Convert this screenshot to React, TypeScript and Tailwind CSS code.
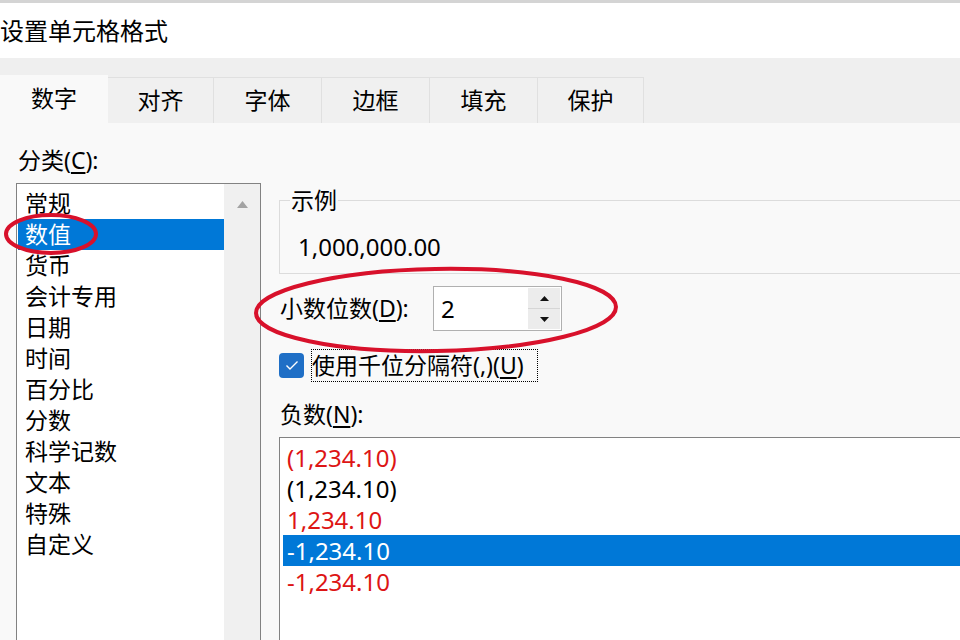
import React from 'react'

const categories = ['常规', '数值', '货币', '会计专用', '日期', '时间', '百分比', '分数', '科学记数', '文本', '特殊', '自定义']

const tabs = [
  { name: '数字', w: 'w-[108px]', active: true },
  { name: '对齐', w: 'w-[106px]' },
  { name: '字体', w: 'w-[108px]' },
  { name: '边框', w: 'w-[108px]' },
  { name: '填充', w: 'w-[108px]' },
  { name: '保护', w: 'w-[106px]' },
]

const negatives = [
  { text: '(1,234.10)', red: true },
  { text: '(1,234.10)' },
  { text: '1,234.10', red: true },
  { text: '-1,234.10', selected: true },
  { text: '-1,234.10', red: true },
]

export default function App() {
  return (
    <div className="relative h-[640px] w-[960px] overflow-hidden bg-[#f9f9f9] font-['Noto_Sans','Noto_Sans_CJK_SC',sans-serif] text-[23px] leading-[31px] text-black">
      {/* cut-off window behind */}
      <div className="h-[3px] bg-[#d4d4d4]" />

      {/* Title */}
      <div className="flex h-[55px] items-center bg-white text-[24px]">设置单元格格式</div>

      {/* Tabs */}
      <div className="flex h-[65px] items-end bg-[#efefef]">
        {tabs.map((t) =>
          t.active ? (
            <div key={t.name} className={`${t.w} flex h-[48px] items-center justify-center bg-[#f9f9f9] pb-[2px]`}>
              {t.name}
            </div>
          ) : (
            <div
              key={t.name}
              className={`${t.w} flex h-[46px] items-center justify-center border-t border-r border-[#e0e0e0] bg-[#f0f0f0]`}
            >
              {t.name}
            </div>
          )
        )}
      </div>

      {/* Body */}
      <div className="flex pl-[16px]">
        {/* Category list */}
        <div className="w-[245px] shrink-0 pt-[22px]">
          <div className="pl-[2px]">
            分类(<span className="underline underline-offset-[3px]">C</span>):
          </div>
          <div className="mt-[7px] flex h-[470px] border border-[#828282] bg-white">
            <div className="flex-1 pt-[4px] pl-[1px]">
              {categories.map((c, i) => (
                <div
                  key={c}
                  className={i === 1 ? 'h-[31px] bg-[#0078d7] pl-[7px] text-white' : 'h-[31px] pl-[7px]'}
                >
                  {c}
                </div>
              ))}
            </div>
            <div className="flex w-[36px] justify-center bg-[#f0f0f0] pt-[17px]">
              <svg width="11" height="7" viewBox="0 0 11 7">
                <path d="M0 7 L5.5 0 L11 7 Z" fill="#a3a3a3" />
              </svg>
            </div>
          </div>
        </div>

        {/* Right side */}
        <div className="ml-[18px] w-[720px] shrink-0 pt-[62px]">
          <fieldset className="border border-[#dcdcdc] pb-[11px]">
            <legend className="ml-[10px] px-[1px]">示例</legend>
            <div className="mt-[15px] pl-[18px] text-[24px]">1,000,000.00</div>
          </fieldset>

          <div className="mt-[12px] flex h-[45px] items-center pl-[1px]">
            <div className="w-[153px]">
              小数位数(<span className="underline underline-offset-[3px]">D</span>):
            </div>
            <div className="flex h-[45px] w-[129px] items-center justify-between border border-[#b0b0b0] bg-white pr-[1px] pl-[7px] text-[24px]">
              <span>2</span>
              <div className="flex h-[41px] w-[32px] flex-col gap-[1px] bg-[#d6d6d6]">
                <div className="flex flex-1 items-center justify-center bg-[#ececec]">
                  <svg width="9" height="5" viewBox="0 0 9 5">
                    <path d="M0 5 L4.5 0 L9 5 Z" fill="#111" />
                  </svg>
                </div>
                <div className="flex flex-1 items-center justify-center bg-[#ececec]">
                  <svg width="9" height="5" viewBox="0 0 9 5">
                    <path d="M0 0 L4.5 5 L9 0 Z" fill="#111" />
                  </svg>
                </div>
              </div>
            </div>
          </div>

          <div className="mt-[18px] flex h-[33px] items-center">
            <div className="flex h-[25px] w-[25px] items-center justify-center rounded-[4px] bg-[#1f6fc6]">
              <svg width="14" height="11" viewBox="0 0 14 11">
                <path d="M1.5 5.5 L5 9 L12.5 1.5" stroke="white" strokeWidth="1.4" fill="none" />
              </svg>
            </div>
            <div className="ml-[7px] flex h-[33px] w-[227px] items-center border border-dotted border-black">
              使用千位分隔符(,)(<span className="underline underline-offset-[3px]">U</span>)
            </div>
          </div>

          <div className="mt-[17px] pl-[1px]">
            负数(<span className="underline underline-offset-[3px]">N</span>):
          </div>
          <div className="mt-[7px] h-[300px] border border-[#828282] bg-white px-[3px] pt-[4px] text-[24px]">
            {negatives.map((n, i) => (
              <div
                key={i}
                className={
                  n.selected
                    ? 'h-[31px] bg-[#0078d7] pl-[4px] text-white'
                    : n.red
                      ? 'h-[31px] pl-[4px] text-[#dd1515]'
                      : 'h-[31px] pl-[4px]'
                }
              >
                {n.text}
              </div>
            ))}
          </div>
        </div>
      </div>

      {/* red annotation ellipses */}
      <svg className="pointer-events-none absolute top-0 left-0" width="960" height="640">
        <ellipse cx="51" cy="234" rx="45" ry="19" fill="none" stroke="#d8112b" strokeWidth="4" />
        <ellipse cx="436" cy="310" rx="180" ry="41" fill="none" stroke="#d8112b" strokeWidth="4" transform="rotate(-1 436 310)" />
      </svg>
    </div>
  )
}
